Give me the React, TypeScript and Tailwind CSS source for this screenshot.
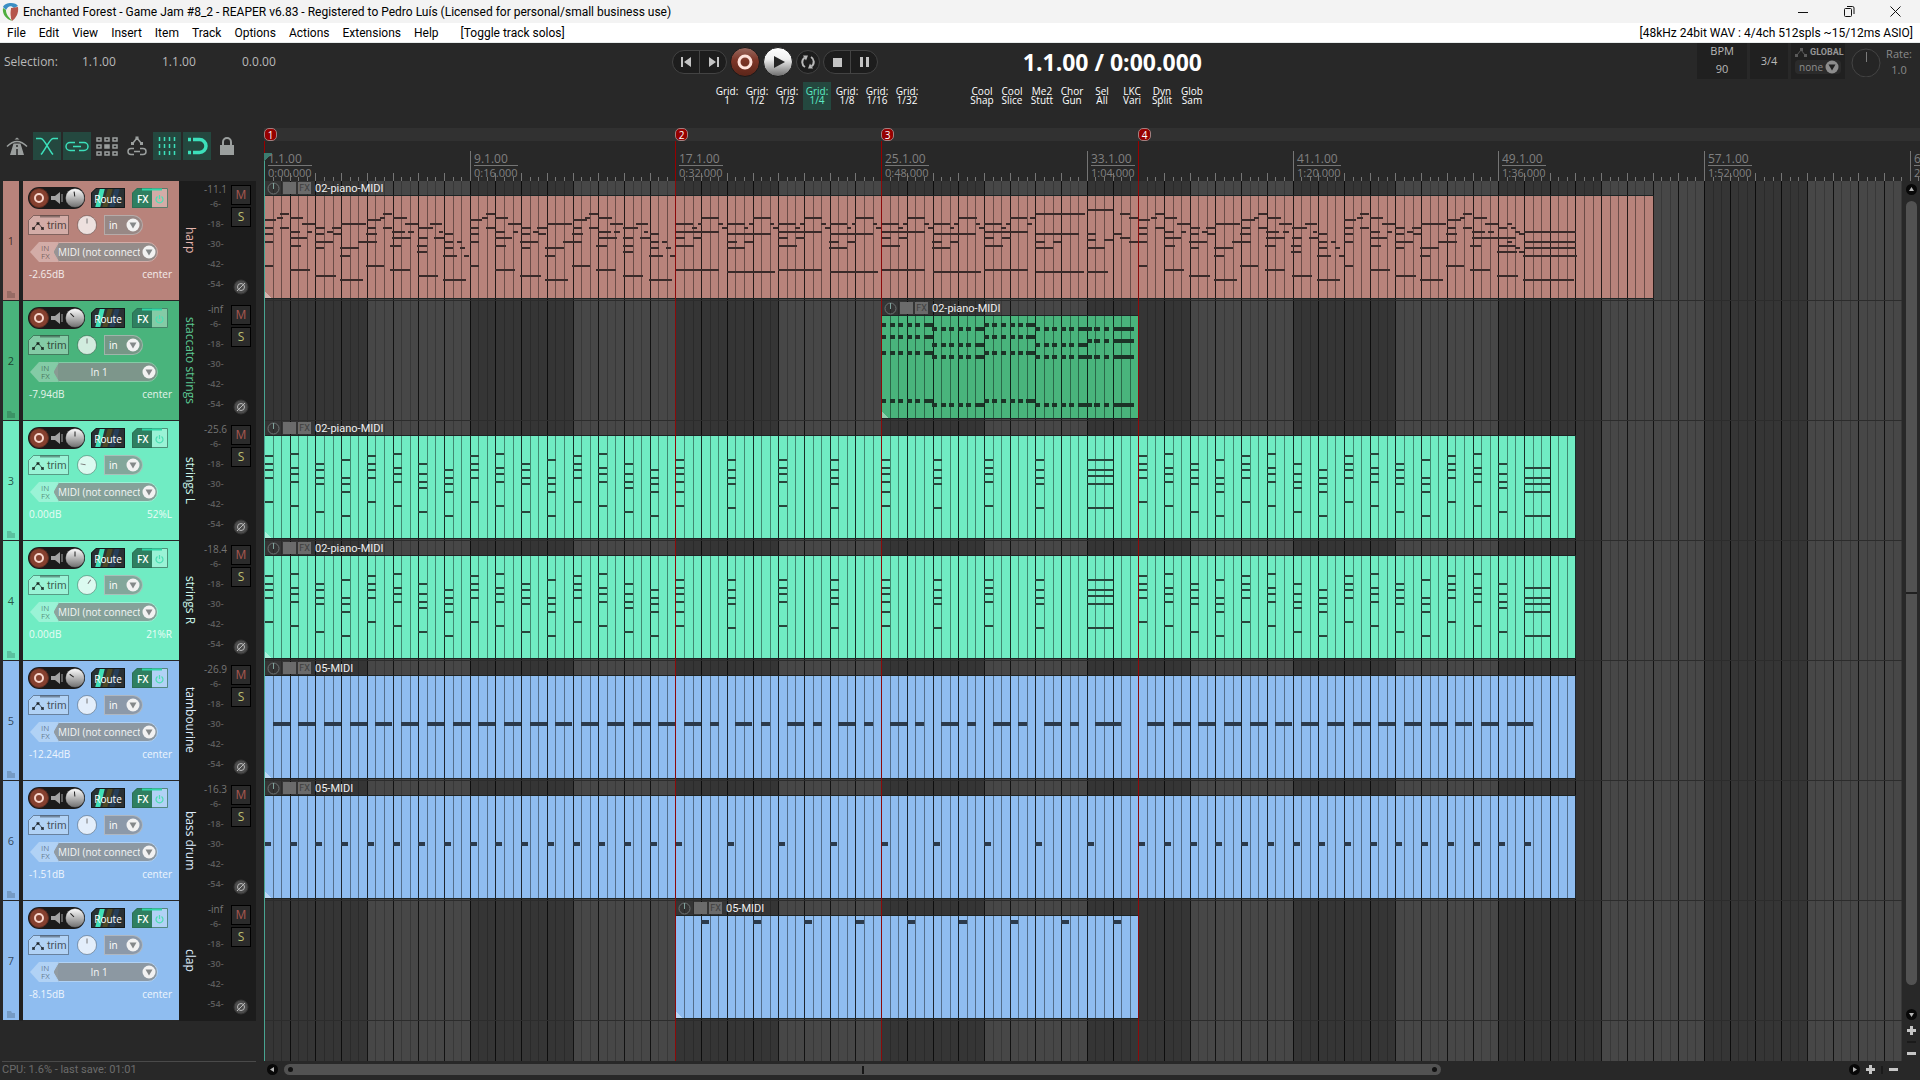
import React from 'react';

type Note = [start: number, end: number, row: number];

interface Item {
  name: string;
  from: number;
  to: number;
  notes: Note[];
  noteHeight: number;
}

interface Track {
  id: number;
  name: string;
  bg: string;
  tint: string;
  nameColor: string;
  noteColor: string;
  peak: string;
  volume: string;
  pan: string;
  input: string;
  volAngle: number;
  panAngle: number;
  item: Item;
}

// 72 ticks per measure, 24 per beat
const TICKS = 72;
const MEASURES = 80;
const px = (tick: number) => Math.round(tick / 2.8);
const measureX = (m: number) => px(m * TICKS);

const shift = (notes: Note[], measure: number): Note[] =>
  notes.map(([a, b, r]) => [a + measure * TICKS, b + measure * TICKS, r]);

const range = (from: number, to: number, step = 1) => {
  const out: number[] = [];
  for (let i = from; i < to; i += step) out.push(i);
  return out;
};

const HARP_A: Note[] = [
  [0, 33, 12], [35, 51, 11], [46, 72, 9], [0, 24, 16], [46, 72, 16], [0, 26, 19], [0, 26, 23], [0, 26, 35],
  [72, 107, 11], [107, 142, 14], [72, 99, 18], [120, 135, 18], [72, 120, 21], [72, 102, 25], [72, 127, 37],
  [144, 172, 16], [189, 216, 16], [177, 194, 18], [144, 169, 19], [192, 215, 19], [142, 191, 23], [144, 169, 26], [142, 200, 40],
  [216, 287, 14], [262, 315, 23], [212, 264, 26], [212, 239, 30], [212, 275, 42],
  [288, 326, 12], [324, 337, 11], [334, 360, 9], [288, 312, 16], [334, 360, 16], [285, 315, 19], [285, 334, 35],
  [360, 399, 11], [394, 430, 14], [358, 393, 18], [404, 421, 18], [358, 410, 21], [354, 385, 25], [354, 410, 37],
];

const HARP_A_END: Note[] = [
  [430, 471, 16], [466, 499, 14], [489, 499, 18], [430, 457, 21], [477, 504, 21], [428, 457, 25], [428, 457, 28], [430, 485, 40],
  [504, 530, 19], [504, 528, 23], [539, 553, 23], [504, 528, 26], [550, 564, 26], [501, 541, 30], [561, 576, 30], [501, 564, 42],
];

const HARP_B: Note[] = [
  [0, 49, 14], [62, 74, 14], [47, 62, 16], [0, 122, 18], [0, 27, 21], [49, 74, 21], [0, 52, 25], [0, 122, 37],
  [74, 122, 11], [119, 133, 14], [131, 146, 16],
];

const HARP_B_ANSWER: Note[] = [
  [146, 193, 14], [205, 217, 14], [193, 205, 16], [146, 267, 19], [143, 170, 23], [193, 217, 23], [143, 194, 26], [144, 279, 38],
  [217, 267, 11], [265, 276, 14], [273, 288, 16],
];

const HARP_BRIDGE: Note[] = [
  [130, 145, 11], [145, 281, 9], [145, 264, 19], [142, 169, 23], [192, 215, 23], [142, 193, 26], [145, 278, 38],
  [288, 361, 7], [288, 314, 19], [288, 314, 22], [335, 361, 22], [288, 337, 26], [288, 348, 38],
  [382, 409, 9], [407, 431, 11], [361, 385, 19], [382, 409, 21], [407, 457, 23],
];

const HARP_CODA: Note[] = [
  [0, 25, 16], [35, 50, 16], [23, 37, 14], [48, 61, 18], [59, 72, 19], [-23, 51, 21], [23, 37, 23],
  [0, 50, 25], [48, 61, 26], [-5, 51, 28], [59, 72, 28], [-5, 53, 40],
  [72, 218, 18], [72, 218, 23], [72, 218, 26], [68, 218, 30], [68, 212, 42],
];

const harp: Note[] = [
  ...HARP_A, ...HARP_A_END,
  ...shift([...HARP_A, ...HARP_A_END], 8),
  ...[16, 20, 24].flatMap(m => shift([...HARP_B, ...HARP_B_ANSWER], m)),
  ...shift([...HARP_B.slice(0, -1), ...HARP_BRIDGE], 28),
  ...shift([...HARP_A, ...HARP_A_END], 34),
  ...shift(HARP_A, 42),
  ...shift(HARP_CODA, 48),
];

// Two bars of eighth-note stabs, the last one held
const stabs = (measure: number, rows: number[]): Note[] =>
  rows.flatMap(r =>
    shift([[0, 14, r], [24, 38, r], [47, 62, r], [72, 85, r], [95, 110, r], [119, 145, r]], measure),
  );

const staccato: Note[] = [
  ...stabs(0, [4.5, 10.5, 18.5, 42.5]),
  ...stabs(2, [6.5, 14.5, 20.5, 44.5]),
  ...stabs(4, [4.5, 10.5, 18.5, 42.5]),
  ...stabs(6, [6.5, 14.5, 20.5, 44.5]),
  ...[6.5, 12.5, 20.5, 44.5].flatMap(r => shift([[0, 13, r], [21, 37, r], [47, 60, r], [73, 133, r]], 8)),
];

const chord = (measure: number, rows: number[], length = 24): Note[] =>
  rows.map(r => [measure * TICKS, measure * TICKS + length, r]);

const VERSE = [
  [10, 14, 17, 21, 33], [9, 16, 19, 23, 35], [14, 17, 21, 24, 38], [12, 21, 24, 28, 40],
  [10, 14, 17, 21, 33], [9, 16, 19, 23, 35], [14, 19, 23, 26, 38], [17, 21, 24, 28, 40],
];
const CHORUS = [
  [12, 16, 19, 23, 28, 35], [12, 17, 21, 24, 36], [12, 16, 19, 23, 35], [12, 17, 21, 24, 36],
];

const strings: Note[] = [
  ...range(0, 16).flatMap(m => chord(m, VERSE[m % 8])),
  ...range(0, 8).flatMap(i => chord(16 + i * 2, CHORUS[i % 4])),
  ...chord(32, [12, 17, 20, 24, 36], 72),
  ...range(0, 15).flatMap(i => chord(34 + i, VERSE[i % 8])),
  ...chord(49, [16, 21, 24, 28, 40], 72),
];

const tambourine: Note[] = [
  ...range(0, 16).map((m): Note => [m * TICKS + 24, m * TICKS + 72, 24]),
  ...range(16, 32).map((m): Note => [m * TICKS + 24, m * TICKS + (m % 2 ? 48 : 72), 24]),
  ...shift([[24, 96, 24]], 32),
  ...range(34, 48).map((m): Note => [m * TICKS + 24, m * TICKS + 72, 24]),
  ...shift([[24, 96, 24]], 48),
];

const bassDrum: Note[] = [...range(0, 16), ...range(16, 34, 2), ...range(34, 50)].map(
  (m): Note => [m * TICKS, m * TICKS + 20, 24],
);

const clap: Note[] = range(1, 18, 2).map((m): Note => [m * TICKS + 2, m * TICKS + 23, 3]);

const SALMON = { bg: '#b8837b', tint: '#d3aca7', nameColor: '#e3b4ad', noteColor: '#392a29' };
const GREEN = { bg: '#49b47c', tint: '#84cba6', nameColor: '#5bc791', noteColor: '#1c3327' };
const MINT = { bg: '#70ecc3', tint: '#9af3d6', nameColor: '#c9f5ea', noteColor: '#28463c' };
const BLUE = { bg: '#8fbdf0', tint: '#b1d2f5', nameColor: '#dcebfb', noteColor: '#2b3a4b' };

const MIDI_IN = 'MIDI (not connected)';

const TRACKS: Track[] = [
  { id: 1, name: 'harp', ...SALMON, peak: '-11.1', volume: '-2.65dB', pan: 'center', input: MIDI_IN, volAngle: -8, panAngle: 0,
    item: { name: '02-piano-MIDI', from: 0, to: 54, notes: harp, noteHeight: 2 } },
  { id: 2, name: 'staccato strings', ...GREEN, peak: '-inf', volume: '-7.94dB', pan: 'center', input: 'In 1', volAngle: -45, panAngle: 0,
    item: { name: '02-piano-MIDI', from: 24, to: 34, notes: staccato, noteHeight: 4 } },
  { id: 3, name: 'strings L', ...MINT, peak: '-25.6', volume: '0.00dB', pan: '52%L', input: MIDI_IN, volAngle: 0, panAngle: -80,
    item: { name: '02-piano-MIDI', from: 0, to: 51, notes: strings, noteHeight: 2 } },
  { id: 4, name: 'strings R', ...MINT, peak: '-18.4', volume: '0.00dB', pan: '21%R', input: MIDI_IN, volAngle: 0, panAngle: 35,
    item: { name: '02-piano-MIDI', from: 0, to: 51, notes: strings, noteHeight: 2 } },
  { id: 5, name: 'tambourine', ...BLUE, peak: '-26.9', volume: '-12.24dB', pan: 'center', input: MIDI_IN, volAngle: -55, panAngle: 0,
    item: { name: '05-MIDI', from: 0, to: 51, notes: tambourine, noteHeight: 4 } },
  { id: 6, name: 'bass drum', ...BLUE, peak: '-16.3', volume: '-1.51dB', pan: 'center', input: MIDI_IN, volAngle: -5, panAngle: 0,
    item: { name: '05-MIDI', from: 0, to: 51, notes: bassDrum, noteHeight: 4 } },
  { id: 7, name: 'clap', ...BLUE, peak: '-inf', volume: '-8.15dB', pan: 'center', input: 'In 1', volAngle: -45, panAngle: 0,
    item: { name: '05-MIDI', from: 16, to: 34, notes: clap, noteHeight: 4 } },
];

const MARKERS = [
  { label: '1', measure: 0 },
  { label: '2', measure: 16 },
  { label: '3', measure: 24 },
  { label: '4', measure: 34 },
];

const MENU = ['File', 'Edit', 'View', 'Insert', 'Item', 'Track', 'Options', 'Actions', 'Extensions', 'Help'];
const GRID = ['1', '1/2', '1/3', '1/4', '1/8', '1/16', '1/32'];
const MACROS = [
  ['Cool', 'Shap'], ['Cool', 'Slice'], ['Me2', 'Stutt'], ['Chor', 'Gun'],
  ['Sel', 'All'], ['LKC', 'Vari'], ['Dyn', 'Split'], ['Glob', 'Sam'],
];

const DropArrow = ({ fill, inner }: { fill: string; inner: string }) => (
  <svg width="14" height="14" viewBox="0 0 14 14" className="pointer-events-none shrink-0">
    <circle cx="7" cy="7" r="6.5" fill={fill} />
    <path d="M3.5 4.5h7L7 10.5z" fill={inner} />
  </svg>
);

const TitleBar = () => (
  <header className="flex h-[23px] items-center bg-[#f3f3f3] pr-[2px] font-['Roboto',sans-serif] text-black">
    <svg width="17" height="20" viewBox="0 0 17 20" className="ml-[2px] mr-1">
      <path d="M1 5C3 0 14 0 16 4L12 6C9 3 6 4 4 8z" fill="#3b8fc4" />
      <path d="M1 6L4 8C4 13 7 15 10 19C4 17 0 12 1 6z" fill="#4fae3d" />
      <path d="M16 5C17 11 14 16 10 19C8 15 8 9 9 6z" fill="#b5564c" />
      <path d="M5 8C7 5 9 5 9 6C8 10 8 13 9 16C6 14 5 11 5 8z" fill="#f5efe6" />
    </svg>
    <h1 className="flex-1 truncate text-[12px] leading-4">
      Enchanted Forest - Game Jam #8_2 - REAPER v6.83 - Registered to Pedro Luís (Licensed for personal/small business use)
    </h1>
    <button aria-label="Minimize" className="flex w-[46px] justify-center">
      <svg width="10" height="10" stroke="#111" fill="none"><path d="M0 5.5h10" /></svg>
    </button>
    <button aria-label="Restore" className="flex w-[46px] justify-center">
      <svg width="11" height="11" stroke="#111" fill="none">
        <rect x="0.5" y="2.5" width="7" height="8" rx="1" />
        <path d="M3 .5h5.5a1.500 1.500 0 0 1 1.500 1.500V8" />
      </svg>
    </button>
    <button aria-label="Close" className="flex w-[46px] justify-center">
      <svg width="11" height="11" stroke="#111" fill="none"><path d="M.5 .5l10 10M10.500 .5l-10 10" /></svg>
    </button>
  </header>
);

const MenuBar = () => (
  <nav className="flex h-5 items-center border-b border-[#e8ecec] bg-white px-[7px] font-['Roboto',sans-serif] text-[12px] leading-4 text-black">
    <div className="flex gap-[13px]">
      {MENU.map(m => (
        <button key={m}>{m}</button>
      ))}
    </div>
    <button className="ml-[22px]">[Toggle track solos]</button>
    <span className="ml-auto">[48kHz 24bit WAV : 4/4ch 512spls ~15/12ms ASIO]</span>
  </nav>
);

const Transport = () => (
  <div className="flex h-[30px] items-center">
    <div className="flex h-6 overflow-hidden rounded-l-full rounded-r-full border border-[#434343] bg-[#1d1d1d]">
      <button aria-label="Go to start" className="flex w-[27px] items-center justify-center border-r border-[#434343]">
        <svg width="11" height="10" fill="#c4c4c4"><path d="M0 0h2v10H0zM10 0v10L3 5z" /></svg>
      </button>
      <button aria-label="Go to end" className="flex w-[26px] items-center justify-center">
        <svg width="11" height="10" fill="#c4c4c4"><path d="M9 0h2v10H9zM1 0v10l7-5z" /></svg>
      </button>
    </div>
    <button aria-label="Record" className="ml-[3px]">
      <svg width="30" height="30" viewBox="0 0 30 30">
        <defs>
          <linearGradient id="rec" x1="0" y1="0" x2="0" y2="1">
            <stop offset="0" stopColor="#9a6a60" />
            <stop offset=".45" stopColor="#7c3527" />
            <stop offset="1" stopColor="#5a2519" />
          </linearGradient>
        </defs>
        <circle cx="15" cy="15" r="14.500" fill="url(#rec)" stroke="#1a1a1a" />
        <circle cx="15" cy="15" r="6" fill="none" stroke="#ffe3dc" strokeWidth="3" />
      </svg>
    </button>
    <button aria-label="Play" className="ml-[3px]">
      <svg width="30" height="30" viewBox="0 0 30 30">
        <defs>
          <linearGradient id="play" x1="0" y1="0" x2="0" y2="1">
            <stop offset="0" stopColor="#fff" />
            <stop offset=".4" stopColor="#f0f0f0" />
            <stop offset="1" stopColor="#6a6a6a" />
          </linearGradient>
        </defs>
        <circle cx="15" cy="15" r="14.500" fill="url(#play)" stroke="#1a1a1a" />
        <path d="M11 9l11 6-11 6z" fill="#262626" />
      </svg>
    </button>
    <button aria-label="Repeat" className="ml-[3px]">
      <svg width="24" height="24" viewBox="0 0 24 24" fill="none">
        <circle cx="12" cy="12" r="11.500" fill="#1d1d1d" stroke="#434343" />
        <path d="M9 17A5.500 5.500 0 0 1 8.500 7.800M15 7a5.500 5.500 0 0 1 .5 9.200" stroke="#b8b8b8" strokeWidth="2" />
        <path d="M7 5.500h5l-2 5zM17 18.500h-5l2-5z" fill="#b8b8b8" />
      </svg>
    </button>
    <div className="ml-[3px] flex h-6 overflow-hidden rounded-l-full rounded-r-full border border-[#434343] bg-[#1d1d1d]">
      <button aria-label="Stop" className="flex w-[27px] items-center justify-center border-r border-[#434343]">
        <svg width="9" height="9" fill="#c4c4c4"><path d="M0 0h9v9H0z" /></svg>
      </button>
      <button aria-label="Pause" className="flex w-[26px] items-center justify-center">
        <svg width="9" height="10" fill="#c4c4c4"><path d="M0 0h3v10H0zM6 0h3v10H6z" /></svg>
      </button>
    </div>
  </div>
);

const TopPanel = () => (
  <section className="flex h-[85px] text-[11px] text-[#b9b9b9]">
    <div className="flex w-[672px] gap-6 pl-1 pt-[11px] text-[12px] leading-4">
      <span className="w-[54px]">Selection:</span>
      <span className="w-14">1.1.00</span>
      <span className="w-14">1.1.00</span>
      <span>0.0.00</span>
    </div>
    <div className="w-[560px] pt-1">
      <div className="flex items-center justify-between">
        <Transport />
        <output className="mr-[30px] text-[23px] font-bold leading-7 text-white">1.1.00 / 0:00.000</output>
      </div>
      <div className="mt-[5px] flex justify-between pl-10 pr-[25px] text-[10px] leading-[9px] text-white">
        <div className="flex">
          {GRID.map(g => (
            <button
              key={g}
              className={`flex h-7 w-[30px] flex-col items-center justify-center border-x border-[#282828] ${g === '1/4' ? 'bg-[#24483f] text-[#5eeac5]' : ''}`}
            >
              <span>Grid:</span>
              <span>{g}</span>
            </button>
          ))}
        </div>
        <div className="flex">
          {MACROS.map(([a, b]) => (
            <button key={a + b} className="flex h-7 w-[30px] flex-col items-center justify-center">
              <span>{a}</span>
              <span>{b}</span>
            </button>
          ))}
        </div>
      </div>
    </div>
    <div className="ml-auto flex h-9 gap-[3px] pr-2">
      <div className="flex w-[50px] flex-col items-center gap-[2px] bg-[#202020] leading-4">
        <span>BPM</span>
        <span>90</span>
      </div>
      <div className="flex w-[38px] items-center justify-center bg-[#202020]">3/4</div>
      <div className="w-[54px] bg-[#202020] px-1 pt-[3px] text-[9px] leading-3">
        <div className="flex items-center gap-[2px] font-['Roboto',sans-serif] font-bold text-[#969696]">
          <svg width="13" height="9" stroke="#5a5a5a" fill="#5a5a5a" className="shrink-0">
            <path d="M2 7l4-5 4 5" fill="none" />
            <path d="M0 6h3v3H0zM5 0h3v3H5zM9 6h3v3H9z" stroke="none" />
          </svg>
          GLOBAL
        </div>
        <label className="mt-[2px] flex h-[14px] items-center justify-between rounded-sm bg-[#2b2b2b] pl-1 pr-[2px]">
          <select aria-label="Global automation" className="w-[26px] appearance-none text-[10px] text-[#8d8d8d]">
            <option>none</option>
          </select>
          <DropArrow fill="#8d8d8d" inner="#202020" />
        </label>
      </div>
      <button aria-label="Play rate" className="ml-[3px]">
        <svg width="30" height="32" fill="none">
          <circle cx="15" cy="18" r="14" fill="#252525" stroke="#444" />
          <path d="M15.500 7v10" stroke="#7b7b7b" />
        </svg>
      </button>
      <div className="ml-[2px] flex flex-col items-center pt-[3px] leading-4 text-[#8a8a8a]">
        <span>Rate:</span>
        <span>1.0</span>
      </div>
    </div>
  </section>
);

const ToolButton = ({ label, active, children }: { label: string; active?: boolean; children: React.ReactNode }) => (
  <button
    aria-label={label}
    className={`flex size-7 items-center justify-center ${active ? 'bg-[#24483f] text-[#3ce0bb]' : 'text-[#9b9f9e]'}`}
  >
    <svg width="24" height="24" viewBox="0 0 24 24" fill="none" stroke="currentColor" strokeWidth="1.500">
      {children}
    </svg>
  </button>
);

const MainToolbar = () => (
  <div className="flex w-[264px] gap-[2px] pl-[3px] pt-1">
    <ToolButton label="Metronome">
      <path d="M2 12.500q10-10 20 0" />
      <path d="M8.500 9.500h7L19 21H5zM9.500 5.500l2.500-2 2.500 2z" fill="currentColor" stroke="none" />
      <path d="M12 11v2M12 15v6" stroke="#282828" />
    </ToolButton>
    <ToolButton label="Auto crossfade" active>
      <path d="M1 4.500h5C9 4.500 14 16 18 20.500M23 4.500h-5C15 4.500 10 16 6 20.500" />
    </ToolButton>
    <ToolButton label="Item grouping" active>
      <path d="M10 8.500H5a3.500 3.500 0 0 0 0 8h5M14 8.500h5a3.500 3.500 0 0 1 0 8h-5M8 12.500h8" />
    </ToolButton>
    <ToolButton label="Ripple editing">
      {[4, 11, 18].map(y => [2, 10, 18].map(x => (
        <rect key={`${x}-${y}`} x={x} y={y} width="4" height="3" fill={x === 10 && y === 11 ? 'currentColor' : 'none'} />
      )))}
    </ToolButton>
    <ToolButton label="Envelope points with items">
      <path d="M8 9l4-5 4 5M9 14.500H6a3 3 0 0 0 0 6h3M15 14.500h3a3 3 0 0 1 0 6h-3M9 17.500h6" />
      <path d="M6 8h3v3H6zM10.500 2.500h3v3h-3zM15 8h3v3h-3z" fill="currentColor" stroke="none" />
    </ToolButton>
    <ToolButton label="Grid lines" active>
      <path d="M4.500 3v18M9.500 3v18M14.500 3v18M19.500 3v18" strokeDasharray="4 3" />
    </ToolButton>
    <ToolButton label="Snapping" active>
      <path d="M8 5.500h6.500a6.500 6.500 0 0 1 0 13H8" strokeWidth="3.500" />
      <path d="M3 5.500h3M3 18.500h3" strokeWidth="3.500" />
    </ToolButton>
    <ToolButton label="Locking">
      <path d="M8 12V8a4 4 0 0 1 8 0v4" strokeWidth="2" />
      <path d="M5 11h14v10H5z" fill="currentColor" stroke="none" />
    </ToolButton>
  </div>
);

const timeLabel = (m: number) => {
  const s = m * 2;
  return `${Math.floor(s / 60)}:${String(s % 60).padStart(2, '0')}.000`;
};

const Ruler = () => (
  <div className="relative flex-1 overflow-hidden">
    <div className="h-[13px] bg-[#313131]" />
    <svg className="absolute left-0 top-[13px] h-10 w-full" shapeRendering="crispEdges">
      {range(0, MEASURES * 3).map(b => {
        const h = b % 24 === 0 ? 30 : b % 3 === 0 ? 8 : 4;
        return <rect key={b} x={px(b * 24)} y={40 - h} width="1" height={h} fill="#757575" />;
      })}
      {MARKERS.map(m => (
        <rect key={m.label} x={measureX(m.measure)} y="0" width="1" height="40" fill="#960000" />
      ))}
      <rect x="0" y="12" width="1" height="28" fill="#48a491" />
      <path d="M0 12h8L0 20z" fill="#3c7d70" />
    </svg>
    {range(0, MEASURES, 8).map(m => (
      <div key={m} className="absolute top-6 pl-1 text-[#808080]" style={{ left: measureX(m) }}>
        <div className="border-b border-[#757575] text-[12px] leading-[13px]">{m + 1}.1.00</div>
        <div className="text-[11px] leading-[13px]">{timeLabel(m)}</div>
      </div>
    ))}
    {MARKERS.map(m => (
      <span
        key={m.label}
        className="absolute top-0 flex h-[13px] w-[13px] items-center justify-center rounded-[5px] border border-[#a08080] bg-[#960000] text-[10px] leading-none text-white"
        style={{ left: measureX(m.measure) }}
      >
        {m.label}
      </span>
    ))}
  </div>
);

const Knob = ({ label, angle, dark }: { label: string; angle: number; dark?: boolean }) => (
  <label className="relative">
    <input type="range" aria-label={label} className="sr-only" />
    <svg width="20" height="20" viewBox="0 0 20 20">
      <circle cx="10" cy="10" r="9.500" fill={dark ? 'url(#knob)' : '#fff'} fillOpacity={dark ? 1 : 0.75} stroke="#000" strokeOpacity=".3" />
      <path d="M10 3.500v5" stroke={dark ? '#222' : '#777'} strokeWidth="1" transform={`rotate(${angle} 10 10)`} />
    </svg>
  </label>
);

const TrackPanel = ({ track }: { track: Track }) => (
  <div className="h-[119px] w-[156px] px-[5px] pt-[6px]" style={{ backgroundColor: track.bg }}>
    <div className="flex h-[22px] items-center">
      <div className="flex h-[22px] w-[57px] items-center justify-between rounded-full bg-[#1b1b1b] pl-[1px]">
        <button aria-label={`Record arm ${track.name}`}>
          <svg width="20" height="20" viewBox="0 0 20 20">
            <circle cx="10" cy="10" r="9.500" fill="#85402f" stroke="#5a2a20" />
            <circle cx="10" cy="10" r="4" fill="none" stroke="#f7d5cc" strokeWidth="2" />
          </svg>
        </button>
        <svg width="12" height="12" viewBox="0 0 12 12" fill="#a3a3a3">
          <path d="M0 4h4l5-4v12L4 8H0zM10.500 2h1v8h-1z" />
        </svg>
        <Knob label={`${track.name} volume`} angle={track.volAngle} dark />
      </div>
      <button className="relative ml-[6px] h-5 w-[34px] text-center text-[10px] leading-[22px] text-white">
        <svg className="absolute inset-0" width="34" height="20">
          <path d="M5 0h29v20H0V5z" fill="#2a3133" />
          <path d="M9 0h5L9 20H4z" fill="#3fe0b8" />
          <path d="M17 0h5l-6 20h-5z" fill="#4e4a26" />
          <path d="M24 0h5l-6 20h-5z" fill="#27405a" />
          <path d="M5 .5h28.500v19H.5V5z" fill="none" stroke="#151a1a" />
        </svg>
        <span className="relative">Route</span>
      </button>
      <button className="relative ml-[7px] h-5 w-9 pl-[5px] text-left text-[10px] font-semibold leading-[22px] text-white">
        <svg className="absolute inset-0" width="36" height="20" fill="none">
          <path d="M5 0h15v20H0V5z" fill="#2f7f60" />
          <path d="M20 0h16v20H20z" fill={track.tint} />
          <path d="M5 .5h30.500v19H.5V5z" stroke="#2b6650" strokeOpacity=".7" />
          <path d="M10 1.500h20" stroke="#2fd8a8" strokeWidth="2" />
          <path d="M25.500 8.500a3.500 3.500 0 1 0 4 0M27.500 7v4" stroke="#4ce0b4" strokeWidth="1.200" />
        </svg>
        <span className="relative">FX</span>
      </button>
    </div>
    <div className="mt-[6px] flex h-5 items-center">
      <button className="relative h-5 w-[41px] pl-[19px] text-left font-['Roboto',sans-serif] text-[11px] leading-[22px] text-black/65">
        <svg className="absolute inset-0" width="41" height="20" fill="none">
          <path d="M5.500 .5h35v19H.5v-14z" fill={track.tint} stroke="#000" strokeOpacity=".35" />
          <path d="M12 1.500h20" stroke="#000" strokeOpacity=".35" strokeWidth="2" />
          <path d="M5 14l5-6 5 6" stroke="#000" strokeOpacity=".6" />
          <path d="M4 12h3v3H4zM8.500 7h3v3h-3zM13 12h3v3h-3z" fill="#000" fillOpacity=".6" />
        </svg>
        <span className="relative">trim</span>
      </button>
      <span className="ml-2 flex"><Knob label={`${track.name} pan`} angle={track.panAngle} /></span>
      <label className="ml-[7px] flex h-5 w-[39px] items-center justify-between rounded-r-full border border-white/30 bg-[#8a8a8a]/70 pl-1 pr-[2px]">
        <select aria-label={`${track.name} record mode`} className="w-[16px] appearance-none text-[10px] text-white">
          <option>in</option>
        </select>
        <DropArrow fill="#f2f2f2" inner="#85898a" />
      </label>
    </div>
    <div className="ml-[2px] mt-[7px] flex h-5 w-[128px] items-stretch">
      <button className="relative w-6 pl-[11px] text-left text-[8px] leading-2 text-black/45">
        <svg className="absolute inset-0" width="28" height="20">
          <path d="M0 10L9 0h19v20H9z" fill={track.tint} />
        </svg>
        <span className="relative block">IN</span>
        <span className="relative block">FX</span>
      </button>
      <label className="relative flex flex-1 items-center justify-between pl-1 pr-[2px]">
        <svg className="absolute inset-0" width="104" height="20">
          <path d="M4.500 .5H94a9.500 9.500 0 0 1 0 19H4.500L-1 10z" fill="#8b8f8f" fillOpacity=".8" stroke={track.tint} />
        </svg>
        <select
          aria-label={`${track.name} input`}
          className={`relative w-[82px] appearance-none overflow-hidden text-[10px] text-white/90 ${track.input === 'In 1' ? 'text-center' : ''}`}
        >
          <option>{track.input}</option>
        </select>
        <span className="relative"><DropArrow fill="#f2f2f2" inner="#85898a" /></span>
      </label>
    </div>
    <div className="mt-1 flex justify-between pl-[1px] pr-[2px] text-[10px] leading-4 text-white/85">
      <span>{track.volume}</span>
      <span>{track.pan}</span>
    </div>
  </div>
);

const TrackRow = ({ track }: { track: Track }) => (
  <article className="flex h-[120px] pl-[3px]">
    <div className="flex h-[119px] w-4 flex-col items-center" style={{ backgroundColor: track.bg }}>
      <span className="mt-[52px] text-[11px] leading-4 text-black/65">{track.id}</span>
      <svg width="8" height="7" className="mt-auto mb-[2px]" fill="#000" fillOpacity=".18"><path d="M0 0h4l1 2h3v5H0z" /></svg>
    </div>
    <div className="w-1 bg-[#202020]" />
    <TrackPanel track={track} />
    <div className="flex w-[77px] bg-[#1c1c1c]">
      <h2
        className="flex h-[119px] w-[21px] items-center justify-center whitespace-nowrap text-[12px] leading-4 [writing-mode:vertical-rl]"
        style={{ color: track.nameColor }}
      >
        {track.name}
      </h2>
      <div className="flex w-[31px] flex-col items-center text-[9px] font-semibold leading-3 text-[#5c5c5c]">
        <span className="mt-[2px] text-[10px] font-normal text-[#747474]">{track.peak}</span>
        <div className="mt-[3px] flex flex-col items-center gap-2">
          {['-6-', '-18-', '-30-', '-42-', '-54-'].map(v => (
            <span key={v}>{v}</span>
          ))}
        </div>
      </div>
      <div className="flex flex-col items-center pt-1">
        <button className="size-5 border border-black bg-[#2b2b2b] text-[12px] leading-4 text-[#a85850]">M</button>
        <button className="mt-[2px] size-5 border border-black bg-[#2b2b2b] text-[12px] leading-4 text-[#bdbf70]">S</button>
        <button aria-label={`Phase ${track.name}`} className="mt-[52px]">
          <svg width="16" height="16" fill="none">
            <circle cx="8" cy="8" r="7" fill="#4c4c4c" stroke="#333" />
            <circle cx="8" cy="8" r="3.500" stroke="#bbb" />
            <path d="M4 12l8-8" stroke="#bbb" />
          </svg>
        </button>
      </div>
    </div>
  </article>
);

const MidiItem = ({ track }: { track: Track }) => {
  const { item } = track;
  const left = measureX(item.from);
  const width = measureX(item.to) - left + 1;
  return (
    <div className="absolute top-0 h-[119px]" style={{ left, width }}>
      <div className="flex h-[14px] items-center gap-[2px] pl-[3px]">
        <svg width="13" height="13" fill="none" className="mr-[1px]">
          <circle cx="6.500" cy="6.500" r="5.500" stroke="#6d7373" />
          <path d="M6.500 1v6" stroke="#7fa39c" />
        </svg>
        <span className="h-3 w-[13px] bg-[#6b6b6b]" />
        <span className="h-3 w-[13px] bg-[#6b6b6b] text-center font-['Roboto',sans-serif] text-[9px] leading-3 text-[#3f3f3f]">FX</span>
        <span className="ml-[2px] whitespace-nowrap pt-[2px] font-['Roboto',sans-serif] text-[11px] leading-3 text-[#f0f0f0]">{item.name}</span>
      </div>
      <div className="h-[104px] border-b border-t border-[#1d2424]" style={{ backgroundColor: track.bg }}>
        <svg className="block h-[102px] w-full" shapeRendering="crispEdges">
          {range(item.from * 3, item.to * 3 + 1).map(b => (
            <rect key={b} x={px(b * 24) - left} y="0" width="1" height="102" fill="#000" fillOpacity={b % 3 ? 0.42 : 0.8} />
          ))}
          {item.notes.map(([a, b, r], i) => (
            <rect
              key={i}
              x={px(a)}
              y={r * 2 - item.noteHeight / 2}
              width={px(b - a)}
              height={item.noteHeight}
              fill={track.noteColor}
            />
          ))}
          <path d="M0 95l7 7H0z" fill="#fff" fillOpacity=".4" />
        </svg>
      </div>
    </div>
  );
};

const Arrange = () => (
  <div className="relative flex-1 overflow-hidden bg-[#353535]">
    <svg className="absolute inset-0 h-full w-full" shapeRendering="crispEdges">
      {range(4, MEASURES, 8).map(m => (
        <rect key={m} x={measureX(m)} y="0" width={measureX(m + 4) - measureX(m)} height="100%" fill="#474747" />
      ))}
      {range(0, MEASURES * 3).map(b => (
        <rect key={b} x={px(b * 24)} y="0" width="1" height="100%" fill="#000" fillOpacity={b % 3 ? 0.2 : 0.75} />
      ))}
    </svg>
    {TRACKS.map(t => (
      <div key={t.id} className="relative h-[120px] border-b border-[#2c2c2c]">
        <MidiItem track={t} />
      </div>
    ))}
    <svg className="pointer-events-none absolute inset-0 h-full w-full" shapeRendering="crispEdges">
      {MARKERS.slice(1).map(m => (
        <rect key={m.label} x={measureX(m.measure)} y="0" width="1" height="100%" fill="#8c0a0a" />
      ))}
      <rect x="0" y="0" width="1" height="100%" fill="#48a491" />
    </svg>
  </div>
);

const RoundArrow = ({ label, d }: { label: string; d: string }) => (
  <button aria-label={label} className="flex size-[11px]">
    <svg width="11" height="11">
      <circle cx="5.500" cy="5.500" r="5.500" fill="#080808" />
      <path d={d} fill="#b5b5b5" />
    </svg>
  </button>
);

const ZoomButton = ({ plus }: { plus?: boolean }) => (
  <button aria-label={plus ? 'Zoom in' : 'Zoom out'} className="flex">
    <svg width="9" height="9" fill="#c6c6c6">
      <path d={plus ? 'M3 0h3v3h3v3H6v3H3V6H0V3h3z' : 'M0 3h9v3H0z'} />
    </svg>
  </button>
);

const VerticalScroll = () => (
  <div className="flex w-[18px] flex-col items-center bg-[#282828] pt-[3px]">
    <RoundArrow label="Scroll up" d="M5.500 3L8 7H3z" />
    <div className="mt-[6px] flex w-[11px] flex-1 items-center rounded-full bg-[#525252]">
      <div className="h-[2px] w-full bg-[#202020]" />
    </div>
    <div className="mt-6 flex flex-col items-center gap-[6px] pb-[3px]">
      <RoundArrow label="Scroll down" d="M3 4h5L5.500 8z" />
      <ZoomButton plus />
      <div className="h-[2px] w-[9px] bg-[#1a1a1a]" />
      <ZoomButton />
    </div>
  </div>
);

const BottomBar = () => (
  <footer className="flex h-[19px]">
    <div className="w-[264px] pl-[2px] pr-2">
      <div className="border-t border-[#4a4a4a] font-['Roboto',sans-serif] text-[11px] leading-4 text-[#6c6c6c]">CPU: 1.6% - last save: 01:01</div>
    </div>
    <div className="flex flex-1 items-start pl-[3px] pt-[3px]">
      <RoundArrow label="Scroll left" d="M7 3v5L3 5.500z" />
      <div className="ml-[6px] flex h-[11px] w-[70%] items-center justify-between rounded-full bg-[#525252] px-1">
        <span className="h-[5px] w-[5px] rounded-full bg-[#111]" />
        <span className="h-2 w-[2px] bg-[#161616]" />
        <span className="h-[5px] w-[5px] rounded-full bg-[#111]" />
      </div>
      <div className="ml-auto flex items-center gap-[6px] pr-[22px]">
        <RoundArrow label="Scroll right" d="M4 3v5l4-2.500z" />
        <ZoomButton plus />
        <div className="h-2 w-[2px] bg-[#1a1a1a]" />
        <ZoomButton />
      </div>
    </div>
  </footer>
);

const App: React.FC = () => (
  <div className="flex min-h-screen flex-col overflow-hidden bg-[#282828] font-['Open_Sans','Noto_Sans',sans-serif]">
    <svg width="0" height="0" className="absolute">
      <defs>
        <linearGradient id="knob" x1="0" y1="0" x2="0" y2="1">
          <stop offset="0" stopColor="#fff" />
          <stop offset="1" stopColor="#6e6e6e" />
        </linearGradient>
      </defs>
    </svg>
    <TitleBar />
    <MenuBar />
    <TopPanel />
    <div className="flex h-[53px]">
      <MainToolbar />
      <Ruler />
    </div>
    <main className="flex flex-1">
      <aside className="w-[264px]">
        {TRACKS.map(t => (
          <TrackRow key={t.id} track={t} />
        ))}
      </aside>
      <Arrange />
      <VerticalScroll />
    </main>
    <BottomBar />
  </div>
);

export default App;
